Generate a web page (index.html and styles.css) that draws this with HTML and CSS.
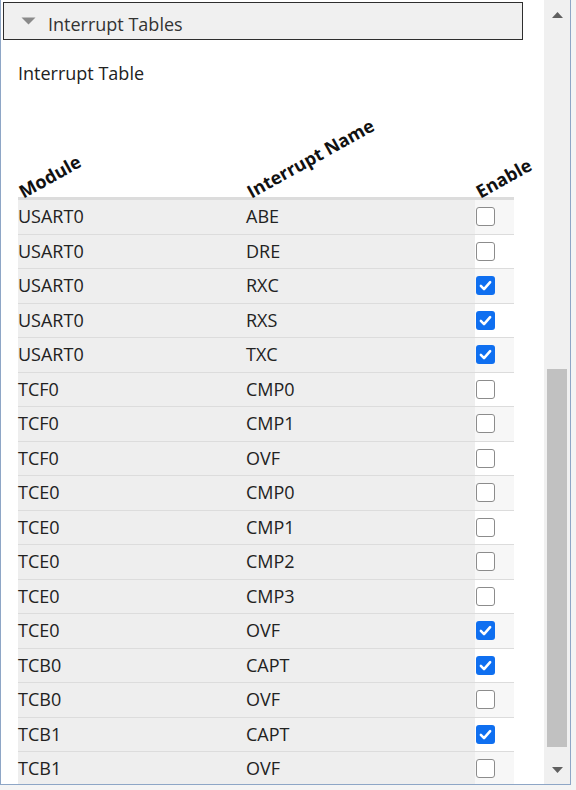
FILE: index.html
```html
<!DOCTYPE html>
<html>
<head>
<meta charset="utf-8">
<link rel="stylesheet" href="styles.css">
</head>
<body>
<div class="window">
  <div class="main">
    <div class="section-header">
      <svg class="caret" width="15" height="8" viewBox="0 0 15 8"><path d="M0.5 0.5 H14.5 L7.5 7.5 Z" fill="#8a8a8a"/></svg>
      <span class="section-title">Interrupt Tables</span>
    </div>
    <div class="label">Interrupt Table</div>
    <div class="table">
      <div class="thead">
        <div class="th"><span>Module</span></div>
        <div class="th"><span>Interrupt Name</span></div>
        <div class="th"><span>Enable</span></div>
      </div>
      <div class="row"><div class="td">USART0</div><div class="td">ABE</div><div class="cb-cell"><span class="cb"></span></div></div>
      <div class="row"><div class="td">USART0</div><div class="td">DRE</div><div class="cb-cell"><span class="cb"></span></div></div>
      <div class="row"><div class="td">USART0</div><div class="td">RXC</div><div class="cb-cell"><span class="cb on"><svg viewBox="0 0 18 18"><path d="M4.6 9.4 L7.6 12.4 L13.4 5.8"/></svg></span></div></div>
      <div class="row"><div class="td">USART0</div><div class="td">RXS</div><div class="cb-cell"><span class="cb on"><svg viewBox="0 0 18 18"><path d="M4.6 9.4 L7.6 12.4 L13.4 5.8"/></svg></span></div></div>
      <div class="row"><div class="td">USART0</div><div class="td">TXC</div><div class="cb-cell"><span class="cb on"><svg viewBox="0 0 18 18"><path d="M4.6 9.4 L7.6 12.4 L13.4 5.8"/></svg></span></div></div>
      <div class="row"><div class="td">TCF0</div><div class="td">CMP0</div><div class="cb-cell"><span class="cb"></span></div></div>
      <div class="row"><div class="td">TCF0</div><div class="td">CMP1</div><div class="cb-cell"><span class="cb"></span></div></div>
      <div class="row"><div class="td">TCF0</div><div class="td">OVF</div><div class="cb-cell"><span class="cb"></span></div></div>
      <div class="row"><div class="td">TCE0</div><div class="td">CMP0</div><div class="cb-cell"><span class="cb"></span></div></div>
      <div class="row"><div class="td">TCE0</div><div class="td">CMP1</div><div class="cb-cell"><span class="cb"></span></div></div>
      <div class="row"><div class="td">TCE0</div><div class="td">CMP2</div><div class="cb-cell"><span class="cb"></span></div></div>
      <div class="row"><div class="td">TCE0</div><div class="td">CMP3</div><div class="cb-cell"><span class="cb"></span></div></div>
      <div class="row"><div class="td">TCE0</div><div class="td">OVF</div><div class="cb-cell"><span class="cb on"><svg viewBox="0 0 18 18"><path d="M4.6 9.4 L7.6 12.4 L13.4 5.8"/></svg></span></div></div>
      <div class="row"><div class="td">TCB0</div><div class="td">CAPT</div><div class="cb-cell"><span class="cb on"><svg viewBox="0 0 18 18"><path d="M4.6 9.4 L7.6 12.4 L13.4 5.8"/></svg></span></div></div>
      <div class="row"><div class="td">TCB0</div><div class="td">OVF</div><div class="cb-cell"><span class="cb"></span></div></div>
      <div class="row"><div class="td">TCB1</div><div class="td">CAPT</div><div class="cb-cell"><span class="cb on"><svg viewBox="0 0 18 18"><path d="M4.6 9.4 L7.6 12.4 L13.4 5.8"/></svg></span></div></div>
      <div class="row"><div class="td">TCB1</div><div class="td">OVF</div><div class="cb-cell"><span class="cb"></span></div></div>
    </div>
  </div>
  <div class="scrollbar">
    <svg class="arrow" width="11" height="6" viewBox="0 0 11 6"><path d="M0 6 L5.5 0 L11 6 Z" fill="#606060"/></svg>
    <div class="track"><div class="thumb"></div></div>
    <svg class="arrow" width="11" height="6" viewBox="0 0 11 6"><path d="M0 0 L11 0 L5.5 6 Z" fill="#606060"/></svg>
  </div>
</div>
</body>
</html>
```
FILE: styles.css
```css
html, body {
  margin: 0;
  padding: 0;
  background: #f4f4f4;
}
body {
  font-family: "Open Sans", "Noto Sans", sans-serif;
  font-size: 18px;
  color: #222;
}
.window {
  width: 571px;
  height: 785px;
  box-sizing: border-box;
  border-left: 1px solid #8ea6c6;
  border-right: 1px solid #8ea6c6;
  border-bottom: 1px solid #8ea6c6;
  background: #fff;
  display: flex;
  overflow: hidden;
}
.main {
  flex: 1;
  min-width: 0;
  padding-top: 2px;
  overflow: hidden;
}
.section-header {
  margin: 0 21px 0 2px;
  height: 38px;
  box-sizing: border-box;
  border: 1px solid #2e2e2e;
  background: #f0f0f0;
  display: flex;
  align-items: center;
  padding: 5px 0 0 17px;
  line-height: 24px;
}
.caret {
  margin-top: -5px;
  margin-right: 12px;
}
.section-title {
  color: #333;
}
.label {
  margin: 21px 0 0 17px;
  line-height: 24px;
  color: #222;
}
.table {
  margin-left: 17px;
  width: 496px;
}
.thead {
  display: grid;
  grid-template-columns: 228px 229px 39px;
  height: 112px;
  align-items: end;
  border-bottom: 3px solid #dcdcdc;
}
.th {
  position: relative;
  height: 24px;
}
.th span {
  display: inline-block;
  font-weight: 700;
  font-size: 18px;
  line-height: 24px;
  white-space: nowrap;
  transform-origin: 0 100%;
  transform: translate(8px, 6px) rotate(-29deg);
  color: #111;
}
.row {
  display: grid;
  grid-template-columns: 228px 229px 39px;
  height: 34.5px;
  box-sizing: border-box;
  border-bottom: 1px solid #dcdcdc;
  line-height: 33.5px;
}
.td {
  background: #eeeeee;
  padding-bottom: 1px;
  line-height: 32.5px;
}
.cb-cell {
  background: #fff;
  display: flex;
  align-items: center;
}
.row:nth-child(even) .cb-cell {
  background: #f7f7f7;
}
.cb {
  width: 19px;
  height: 19px;
  box-sizing: border-box;
  border: 1.5px solid #8c8c8c;
  border-radius: 3px;
  margin-left: 1px;
  display: block;
  background: #fff;
}
.cb.on {
  border: none;
  background: #0f6ff0;
}
.cb svg {
  display: block;
  width: 19px;
  height: 19px;
}
.cb svg path {
  fill: none;
  stroke: #fff;
  stroke-width: 2.4;
  stroke-linecap: round;
  stroke-linejoin: round;
}
.scrollbar {
  width: 26px;
  background: #f0f0f0;
  display: flex;
  flex-direction: column;
  align-items: center;
}
.arrow {
  display: block;
  flex: none;
}
.scrollbar .arrow:first-child {
  margin-top: 12px;
}
.scrollbar .arrow:last-child {
  margin-bottom: 11px;
}
.track {
  flex: 1;
  width: 100%;
  padding: 0 3px;
  box-sizing: border-box;
  display: flex;
  flex-direction: column;
}
.thumb {
  margin-top: 351px;
  height: 378px;
  width: 20px;
  background: #c1c1c1;
}
```
